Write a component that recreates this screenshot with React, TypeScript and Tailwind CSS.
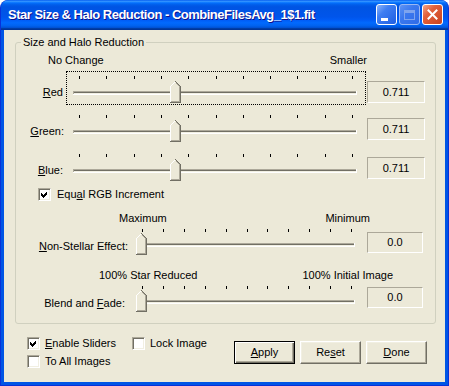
import React from 'react';

// classic trackbar drawn as svg
interface SliderProps {
  width: number;
  height: number;
  tickX: number;
  tickStep: number;
  tickY: number;
  trackX1: number;
  trackX2: number;
  trackY: number;
  thumbX: number;
  thumbY: number;
}

function Slider({ width, height, tickX, tickStep, tickY, trackX1, trackX2, trackY, thumbX, thumbY }: SliderProps) {
  const ticks = Array.from({ length: 11 }, (_, i) => Math.round(tickX + i * tickStep));
  const x = thumbX;
  const y = thumbY;
  return (
    <svg width={width} height={height} shapeRendering="crispEdges" className="block">
      {ticks.map((t) => (
        <rect key={t} x={t} y={tickY} width={1} height={3} fill="#000" />
      ))}
      {/* channel */}
      <rect x={trackX1} y={trackY} width={trackX2 - trackX1} height={4} fill="#ffffff" />
      <rect x={trackX1} y={trackY} width={trackX2 - trackX1 - 1} height={3} fill="#aca899" />
      <rect x={trackX1 + 1} y={trackY + 1} width={trackX2 - trackX1 - 2} height={2} fill="#716f64" />
      <rect x={trackX1 + 1} y={trackY + 2} width={trackX2 - trackX1 - 2} height={1} fill="#f1efe2" />
      {/* thumb */}
      <polygon
        points={`${x},${y + 5} ${x + 5},${y} ${x + 10},${y + 5} ${x + 10},${y + 21} ${x},${y + 21}`}
        fill="#ece9d8"
      />
      <path d={`M${x + 0.5} ${y + 21} V${y + 5.5} L${x + 5.5} ${y + 0.5}`} stroke="#ffffff" fill="none" />
      <path
        d={`M${x + 5.5} ${y + 0.5} L${x + 10.5} ${y + 5.5} V${y + 21.5} H${x}`}
        stroke="#716f64"
        fill="none"
      />
      <path d={`M${x + 6} ${y + 2} L${x + 9.5} ${y + 5.5} V${y + 20.5} H${x + 1}`} stroke="#aca899" fill="none" />
    </svg>
  );
}

function Check({ checked }: { checked?: boolean }) {
  return (
    <div className="w-[13px] h-[13px] shrink-0 bg-white border border-t-[#aca899] border-l-[#aca899] border-r-white border-b-white shadow-[inset_1px_1px_0_#716f64,inset_-1px_-1px_0_#f1efe2]">
      {checked && (
        <svg width={11} height={11} shapeRendering="crispEdges" className="block">
          <polygon points="2,4 4,6 8,2 8,5 4,9 2,7" fill="#000" />
        </svg>
      )}
    </div>
  );
}

function ValueBox({ value, className }: { value: string; className: string }) {
  return (
    <div
      className={`${className} flex items-center justify-center leading-[13px] border border-t-[#aca899] border-l-[#aca899] border-r-white border-b-white`}
    >
      {value}
    </div>
  );
}

function Button({ children, isDefault }: { children: React.ReactNode; isDefault?: boolean }) {
  return (
    <div
      className={`w-[61px] h-[23px] flex items-center justify-center leading-[13px] bg-[#ece9d8] ${
        isDefault
          ? 'border border-black shadow-[inset_1px_1px_0_#ffffff,inset_-1px_-1px_0_#716f64,inset_-2px_-2px_0_#aca899]'
          : 'border border-t-white border-l-white border-r-[#716f64] border-b-[#716f64] shadow-[inset_-1px_-1px_0_#aca899,inset_1px_1px_0_#f1efe2]'
      }`}
    >
      {children}
    </div>
  );
}

function TitleBar() {
  return (
    <div className="h-[30px] shrink-0 flex items-center rounded-t-[8px] bg-[linear-gradient(180deg,#0058ee_0%,#3593ff_4%,#288eff_6%,#127dff_8%,#036ffc_10%,#0262ee_14%,#0057e5_20%,#0054e3_24%,#0055eb_56%,#005bf5_66%,#026afe_76%,#0062ef_86%,#0052d6_92%,#0040ab_94%,#003092_100%)]">
      <div className="pl-[7px] pb-[1px] text-white font-bold text-[13px] tracking-[-0.5px] leading-[16px] [text-shadow:1px_1px_#0f1089] whitespace-nowrap">
        Star Size &amp; Halo Reduction - CombineFilesAvg_1$1.fit
      </div>
      <div className="ml-auto mr-[5px] mb-[1px] flex gap-[2px]">
        {/* minimize */}
        <div className="w-[21px] h-[21px] rounded-[3px] border border-white bg-[linear-gradient(135deg,#8cb4fa_0%,#3f7ef2_35%,#1f5fe2_100%)] flex items-end">
          <div className="ml-[4px] mb-[3px] w-[7px] h-[3px] bg-white" />
        </div>
        {/* maximize, disabled */}
        <div className="w-[21px] h-[21px] rounded-[3px] border border-[#9ab8f2] bg-[linear-gradient(135deg,#5d93f5_0%,#3b78ee_40%,#2e6be8_100%)] flex items-center justify-center">
          <div className="w-[11px] h-[10px] border border-[#7ea4ee] border-t-[3px]" />
        </div>
        {/* close */}
        <div className="w-[21px] h-[21px] rounded-[3px] border border-white bg-[linear-gradient(135deg,#f3a58a_0%,#e2613b_35%,#c8421f_100%)] flex items-center justify-center">
          <svg width={11} height={11} className="block">
            <path d="M1.5 1.5 L9.5 9.5 M9.5 1.5 L1.5 9.5" stroke="#ffffff" strokeWidth={2} strokeLinecap="square" />
          </svg>
        </div>
      </div>
    </div>
  );
}

export default function App() {
  return (
    <div className="w-[449px] h-[386px] font-['Liberation_Sans',Arial,sans-serif] text-[11px] text-black">
      <div className="w-full h-full flex flex-col rounded-t-[8px] bg-[#0055e5] border-x border-b border-[#0831d9]">
        <TitleBar />
        <div className="flex-1 mx-[3px] mb-[3px] bg-[#ece9d8] flex flex-col">
          {/* Group box */}
          <div className="relative ml-[11px] mt-[12px] w-[421px] h-[282px] border border-[#d0d0bf] rounded-[3px] flex flex-col">
            <span className="absolute -top-[7px] left-[5px] px-[2px] bg-[#ece9d8] leading-[13px]">
              Size and Halo Reduction
            </span>

            <div className="mt-[10px] ml-[32px] w-[319px] h-[14px] leading-[14px] flex justify-between">
              <span>No Change</span>
              <span>Smaller</span>
            </div>

            {/* Red */}
            <div className="mt-[4px] h-[34px] flex">
              <div className="w-[47px] mt-[14px] leading-[14px] text-right">
                <u>R</u>ed
              </div>
              <div className="ml-[3px] w-[300px] h-[34px] border border-dotted border-black">
                <Slider width={298} height={32} tickX={12} tickStep={27.3} tickY={4} trackX1={6} trackX2={290} trackY={19} thumbX={103} thumbY={9} />
              </div>
              <ValueBox value="0.711" className="ml-[1px] mt-[10px] w-[58px] h-[22px]" />
            </div>

            {/* Green */}
            <div className="mt-[5px] h-[34px] flex">
              <div className="w-[48px] mt-[14px] leading-[14px] text-right">
                <u>G</u>reen:
              </div>
              <div className="ml-[2px] w-[300px] h-[34px] border border-transparent">
                <Slider width={298} height={32} tickX={12} tickStep={27.3} tickY={4} trackX1={6} trackX2={290} trackY={19} thumbX={103} thumbY={9} />
              </div>
              <ValueBox value="0.711" className="ml-[1px] mt-[8px] w-[58px] h-[22px]" />
            </div>

            {/* Blue */}
            <div className="mt-[5px] h-[34px] flex">
              <div className="w-[47px] mt-[14px] leading-[14px] text-right">
                <u>B</u>lue:
              </div>
              <div className="ml-[3px] w-[300px] h-[34px] border border-transparent">
                <Slider width={298} height={32} tickX={12} tickStep={27.3} tickY={4} trackX1={6} trackX2={290} trackY={19} thumbX={103} thumbY={9} />
              </div>
              <ValueBox value="0.711" className="ml-[1px] mt-[8px] w-[58px] h-[22px]" />
            </div>

            <div className="mt-[5px] ml-[22px] h-[13px] flex items-center">
              <Check checked />
              <span className="ml-[6px] leading-[13px]">
                Equ<u>a</u>l RGB Increment
              </span>
            </div>

            <div className="mt-[10px] ml-[103px] w-[251px] h-[14px] leading-[14px] flex justify-between">
              <span>Maximum</span>
              <span>Minimum</span>
            </div>

            {/* Non-Stellar */}
            <div className="h-[32px] flex">
              <div className="w-[112px] mt-[14px] leading-[14px] text-right">
                <u>N</u>on-Stellar Effect:
              </div>
              <div className="ml-[5px]">
                <Slider width={227} height={32} tickX={9} tickStep={20.9} tickY={4} trackX1={4} trackX2={222} trackY={18} thumbX={3} thumbY={8} />
              </div>
              <ValueBox value="0.0" className="ml-[7px] mt-[7px] w-[56px] h-[21px]" />
            </div>

            <div className="mt-[11px] ml-[83px] w-[294px] h-[14px] leading-[14px] flex justify-between">
              <span>100% Star Reduced</span>
              <span>100% Initial Image</span>
            </div>

            {/* Blend */}
            <div className="h-[32px] flex">
              <div className="w-[109px] mt-[14px] leading-[14px] text-right">
                Blend and <u>F</u>ade:
              </div>
              <div className="ml-[8px]">
                <Slider width={227} height={32} tickX={9} tickStep={20.9} tickY={4} trackX1={4} trackX2={222} trackY={18} thumbX={3} thumbY={8} />
              </div>
              <ValueBox value="0.0" className="ml-[7px] mt-[5px] w-[56px] h-[21px]" />
            </div>
          </div>

          {/* Bottom controls */}
          <div className="mt-[13px] flex items-start">
            <div className="ml-[23px] flex flex-col gap-[5px]">
              <div className="h-[13px] flex items-center">
                <div className="w-[105px] flex items-center">
                  <Check checked />
                  <span className="ml-[5px] leading-[13px]">
                    <u>E</u>nable Sliders
                  </span>
                </div>
                <Check />
                <span className="ml-[5px] leading-[13px]">Lock Image</span>
              </div>
              <div className="h-[13px] flex items-center">
                <Check />
                <span className="ml-[5px] leading-[13px]">To All Images</span>
              </div>
            </div>
            <div className="ml-auto mr-[18px] mt-[4px] flex gap-[5px]">
              <Button isDefault>
                <span>
                  <u>A</u>pply
                </span>
              </Button>
              <Button>
                <span>
                  Re<u>s</u>et
                </span>
              </Button>
              <Button>
                <span>
                  <u>D</u>one
                </span>
              </Button>
            </div>
          </div>
        </div>
      </div>
    </div>
  );
}
